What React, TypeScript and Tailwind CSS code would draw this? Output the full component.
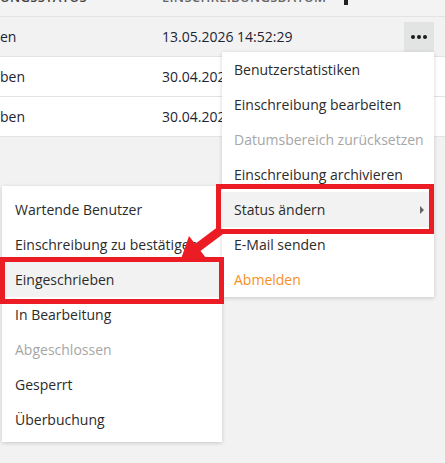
const ROWS = [
  { status: 'en', date: '13.05.2026 14:52:29', active: true },
  { status: 'ben', date: '30.04.2026 09:12:44', active: false },
  { status: 'ben', date: '30.04.2026 09:10:03', active: false },
]

const ACTIONS = [
  { label: 'Benutzerstatistiken' },
  { label: 'Einschreibung bearbeiten' },
  { label: 'Datumsbereich zurücksetzen', disabled: true },
  { label: 'Einschreibung archivieren' },
  { label: 'Status ändern', submenu: true, active: true },
  { label: 'E-Mail senden' },
  { label: 'Abmelden', danger: true },
]

const STATUSES = [
  { label: 'Wartende Benutzer' },
  { label: 'Einschreibung zu bestätigen' },
  { label: 'Eingeschrieben', active: true },
  { label: 'In Bearbeitung' },
  { label: 'Abgeschlossen', disabled: true },
  { label: 'Gesperrt' },
  { label: 'Überbuchung' },
]

type Item = { label: string; disabled?: boolean; danger?: boolean; active?: boolean; submenu?: boolean }

function MenuRow({ item, pad }: { item: Item; pad: string }) {
  return (
    <div
      className={`flex h-[35px] items-center justify-between whitespace-nowrap text-[14px] ${pad} ${
        item.active ? 'bg-[#f2f2f2]' : ''
      } ${item.disabled ? 'text-[#a6a6a6]' : item.danger ? 'text-[#f7901e]' : 'text-[#2b2b2b]'}`}
    >
      <span>{item.label}</span>
      {item.submenu && (
        <span className="mr-[10px] h-0 w-0 border-y-[4px] border-l-[4px] border-y-transparent border-l-[#666]" />
      )}
    </div>
  )
}

export default function App() {
  return (
    <div
      className="relative h-[463px] w-[445px] overflow-hidden bg-[#f2f2f2]"
      style={{ fontFamily: '"Open Sans", "Noto Sans", sans-serif' }}
    >
      {/* Table */}
      <div className="bg-white">
        <div className="flex h-[17px] overflow-hidden border-b border-[#e3e3e3] bg-[#f3f3f3] text-[13px] font-semibold uppercase tracking-wide text-[#444]">
          <div className="-mt-[13px] w-[162px] leading-[20px]">ungsstatus</div>
          <div className="-mt-[13px] flex items-start gap-[18px] leading-[20px] text-[#666]">
            einschreibungsdatum
            <span className="mt-[12px] h-[6px] w-[4px] bg-[#222]" />
          </div>
        </div>
        {ROWS.map((row, i) => (
          <div
            key={i}
            className={`flex h-[40px] items-center border-b border-[#e3e3e3] text-[14px] text-[#1d2433] ${
              row.active ? 'bg-[#f2f2f2]' : 'bg-white'
            }`}
          >
            <div className="w-[162px]">{row.status}</div>
            <div className="flex-1">{row.date}</div>
            {row.active && (
              <button className="mr-[11px] flex h-[30px] w-[30px] items-center justify-center gap-[2px] bg-[#e2e3e3]">
                <span className="h-[4px] w-[4px] rounded-full bg-[#1a1a1a]" />
                <span className="h-[4px] w-[4px] rounded-full bg-[#1a1a1a]" />
                <span className="h-[4px] w-[4px] rounded-full bg-[#1a1a1a]" />
              </button>
            )}
          </div>
        ))}
      </div>

      {/* Status submenu */}
      <div className="absolute left-[2px] top-[186px] w-[220px] bg-white pb-[5px] pt-[6px] shadow-[0_1px_4px_rgba(0,0,0,0.18)]">
        {STATUSES.map((s) => (
          <MenuRow key={s.label} item={s} pad="pl-[13px]" />
        ))}
      </div>

      {/* Actions menu */}
      <div className="absolute left-[222px] top-[52px] w-[212px] bg-white shadow-[0_1px_4px_rgba(0,0,0,0.18)]">
        {ACTIONS.map((a) => (
          <MenuRow key={a.label} item={a} pad="pl-[12px]" />
        ))}
      </div>

      {/* Annotations */}
      <div className="absolute left-[216px] top-[184px] h-[50px] w-[218px] border-[5px] border-[#ec1c24]" />
      <div className="absolute left-0 top-[257px] h-[47px] w-[224px] border-[5px] border-[#ec1c24]" />
      <svg className="absolute left-0 top-0" width="445" height="463" viewBox="0 0 445 463">
        <line x1="221" y1="230" x2="197" y2="248" stroke="#ec1c24" strokeWidth="9" />
        <polygon points="181,259 189,236 206,258" fill="#ec1c24" />
      </svg>
    </div>
  )
}
